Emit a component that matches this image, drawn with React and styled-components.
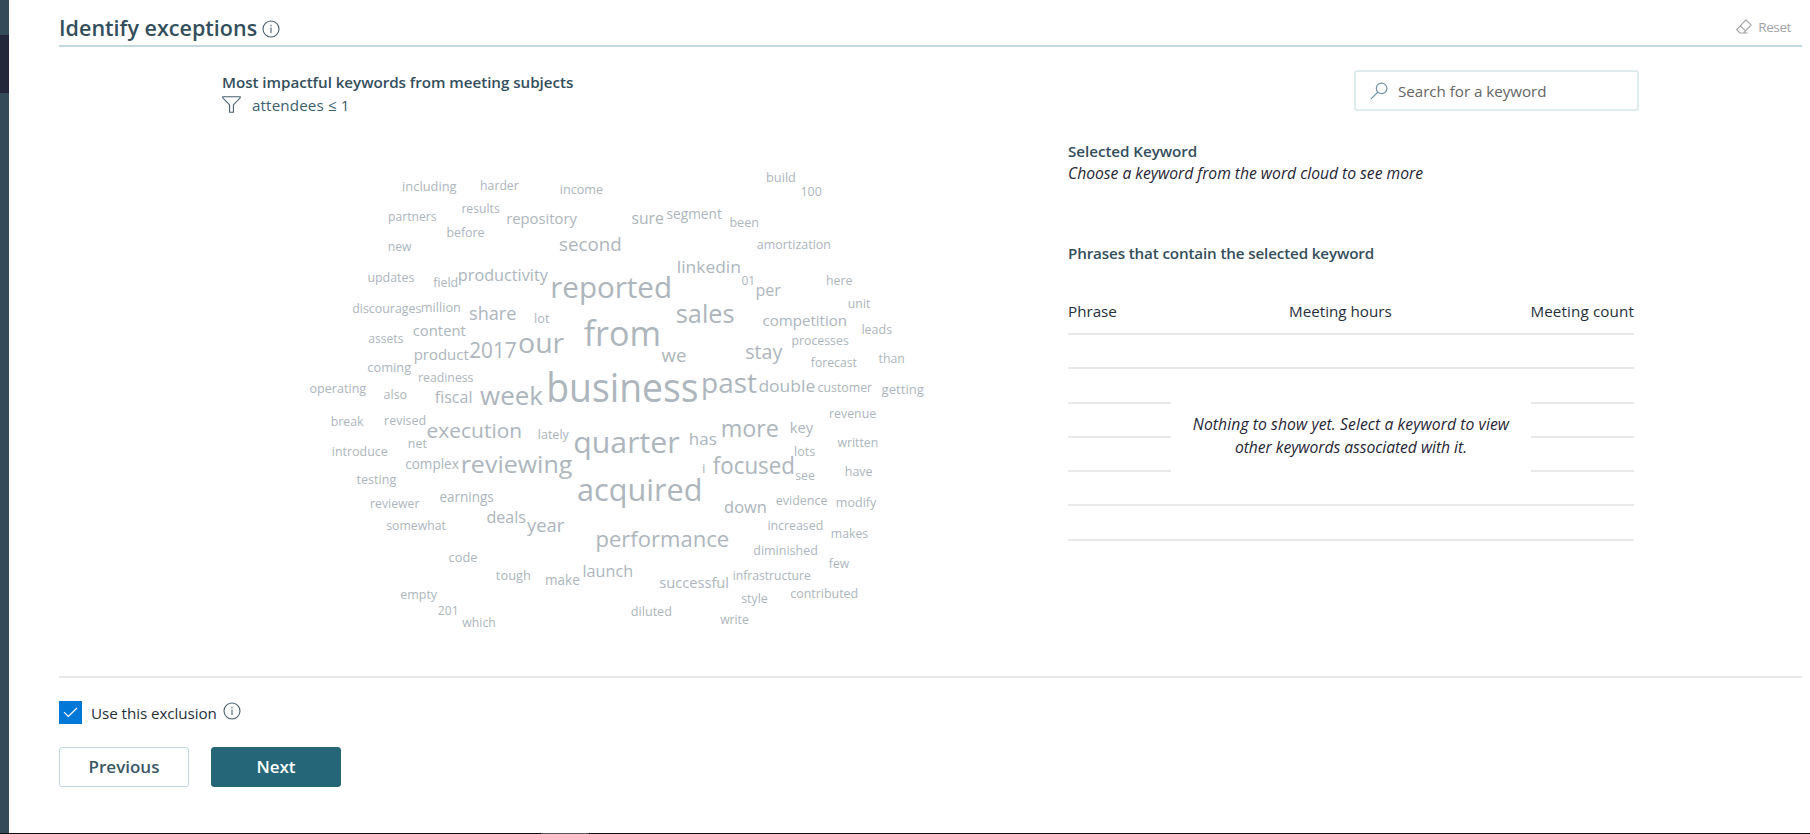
import React from "react";
import styled, { createGlobalStyle } from "styled-components";

const GlobalStyle = createGlobalStyle`
  * { box-sizing: border-box; }
  body { margin: 0; background: #fff; font-family: "Open Sans", "Noto Sans", sans-serif; }
`;

const Screen = styled.div`
  display: flex;
  flex-direction: column;
  height: 834px;
  width: 1810px;
  overflow: hidden;
`;
const Shell = styled.div`
  flex: 1;
  display: flex;
`;
const Rail = styled.div`
  width: 9px;
  padding-top: 35px;
  background: #344b59;
`;
const RailActive = styled.div`
  width: 9px;
  height: 58px;
  background: #23273a;
`;
const Main = styled.main`
  flex: 1;
  padding: 0 8px 0 50px;
  display: flex;
  flex-direction: column;
`;
const Header = styled.header`
  height: 47px;
  padding: 10px 11px 0 0;
  border-bottom: 2px solid #c3d9e1;
  display: flex;
  align-items: center;
  justify-content: space-between;
`;
const TitleGroup = styled.div`
  display: flex;
  align-items: center;
  gap: 5px;
  svg { margin-top: 2px; }
`;
const Title = styled.h1`
  margin: 0;
  font-size: 21.5px;
  font-weight: 600;
  line-height: 30px;
  letter-spacing: 0.02px;
  color: #334e5c;
`;
const ResetButton = styled.button`
  display: flex;
  align-items: center;
  gap: 6px;
  border: 0;
  padding: 0;
  margin-top: -2px;
  background: none;
  font: 400 13.5px/18px "Open Sans", sans-serif;
  letter-spacing: -0.4px;
  color: #a3a3a3;
`;
const Body = styled.section`
  height: 629px;
  padding: 23px 163px 0;
  display: flex;
  justify-content: space-between;
`;
const CloudPanel = styled.div`
  width: 740px;
`;
const Line = styled.div`
  height: ${(p) => p.$h || 24}px;
  line-height: ${(p) => p.$h || 24}px;
  font-size: 15.2px;
  white-space: nowrap;
  letter-spacing: ${(p) => p.$track || 0}px;
  color: #26303c;
`;
const Heading = styled(Line)`
  font-weight: 600;
  color: #334e5c;
`;
const Hint = styled(Line)`
  font-size: 15.7px;
  font-style: italic;
  color: #1f2536;
`;
const FilterRow = styled.div`
  display: flex;
  align-items: center;
  gap: 11px;
  height: 24px;
  margin-top: -1px;
  svg { margin-top: -2px; }
`;
const FilterText = styled(Line)`
  color: #3c6070;
`;
const Cloud = styled.svg`
  display: block;
  margin: 43px 0 0 78px;
  fill: #adb6bd;
  font-family: "Open Sans", "Noto Sans", sans-serif;
`;
const Details = styled.div`
  width: 571px;
  display: flex;
  flex-direction: column;
`;
const SearchBox = styled.div`
  align-self: flex-end;
  width: 285px;
  height: 41px;
  margin-bottom: 29px;
  padding-left: 14px;
  border: 2px solid #dfecee;
  border-radius: 3px;
  display: flex;
  align-items: center;
  gap: 10px;
`;
const Placeholder = styled(Line)`
  color: #666;
`;
const PhrasesHeading = styled(Heading)`
  margin-top: 57px;
`;
const Table = styled.div`
  position: relative;
  width: 566px;
  margin-top: 34px;
`;
const HeadRow = styled.div`
  display: grid;
  grid-template-columns: 221px 1fr auto;
  height: 36px;
  border-bottom: 2px solid #e9e9e9;
`;
const EmptyRow = styled.div`
  height: 34.25px;
  border-bottom: 2px solid #e9e9e9;
`;
const EmptyMessage = styled.div`
  position: absolute;
  top: 98px;
  left: 103px;
  width: 360px;
  height: 80px;
  padding-top: 16px;
  background: #fff;
  text-align: center;
`;
const Footer = styled.footer`
  border-top: 2px solid #e9e9e9;
  padding-top: 23px;
`;
const CheckRow = styled.div`
  display: flex;
  align-items: center;
  height: 23px;
  > svg { margin: -3px 0 0 6px; }
`;
const CheckBox = styled.span`
  width: 23px;
  height: 23px;
  margin-right: 9px;
  background: #0078d7;
  display: flex;
  align-items: center;
  justify-content: center;
`;
const Buttons = styled.div`
  display: flex;
  gap: 22px;
  margin-top: 23px;
`;
const Button = styled.button`
  width: 130px;
  height: 40px;
  padding: 0;
  border-radius: 3px;
  border: 1px solid ${(p) => (p.$primary ? "#256778" : "#c3d9e1")};
  background: ${(p) => (p.$primary ? "#256778" : "#fff")};
  color: ${(p) => (p.$primary ? "#fff" : "#3a5766")};
  font: 600 17px/24px "Open Sans", sans-serif;
`;
const Taskbar = styled.div`
  height: 1px;
  padding-left: 541px;
  background: #101014;
`;
const TaskbarItem = styled.div`
  width: 48px;
  height: 1px;
  background: #55555a;
`;

// word, ink left, ink right, baseline, size
const WORDS = [
  ["including", 403, 455.7, 191.7, 13.6], ["harder", 481, 518.3, 190.3, 13.6], ["income", 560.7, 602.7, 194, 13.6],
  ["results", 462.3, 499.3, 213, 13.6], ["partners", 389, 436, 221.3, 13.6], ["repository", 507.3, 576.7, 224.3, 16],
  ["before", 447.3, 484, 237, 13.6], ["new", 388.7, 411.3, 251, 13.6], ["second", 559.7, 620.3, 250.7, 19],
  ["updates", 368.3, 414, 282, 13.6], ["field", 433.3, 457.3, 287, 13.6], ["productivity", 459, 547.7, 280.7, 17.5],
  ["reported", 552.3, 670, 297.7, 31], ["discourages", 352.7, 421, 313, 13.6], ["million", 421.7, 460, 312.3, 13.6],
  ["share", 469.7, 515.7, 320, 19], ["lot", 535, 549.3, 323, 13.6], ["content", 413.3, 465.7, 336, 16],
  ["assets", 368.7, 403, 343, 13.6], ["product", 414.7, 468.7, 360, 16], ["2017", 470, 516, 358, 22.5],
  ["our", 519, 563.3, 352.7, 29], ["from", 584, 658.7, 345.7, 36], ["coming", 367.7, 410.3, 372, 13.6],
  ["readiness", 419, 473, 382.3, 13.6], ["operating", 310, 365.3, 393.3, 13.6], ["also", 384, 406.7, 399, 13.6],
  ["fiscal", 435, 471.3, 403, 17.5], ["week", 480.3, 542, 405, 27], ["business", 549, 697.3, 401.7, 41.5],
  ["build", 767, 795, 182.3, 13.6], ["100", 801.3, 821.3, 196, 13.6], ["sure", 632, 663.3, 224, 17],
  ["segment", 667, 721.7, 219.3, 14.3], ["been", 730.3, 758, 227.3, 13.6], ["amortization", 757.3, 830, 249.3, 13.6],
  ["linkedin", 678, 739.7, 273, 18], ["01", 742, 754.3, 285, 13.6], ["per", 756.7, 780.3, 295.7, 17.5],
  ["here", 827, 852, 285, 13.6], ["unit", 848.7, 870.3, 308, 13.6], ["sales", 676.7, 733.7, 322.7, 26.5],
  ["competition", 763, 846, 326, 16], ["leads", 862.3, 891.7, 334, 13.6], ["processes", 792.3, 848.3, 345.3, 13.6],
  ["we", 661.7, 685.7, 361.7, 18.5], ["stay", 746, 782, 359, 20.5], ["forecast", 811, 856.7, 367, 13.6],
  ["than", 878.7, 904, 363.3, 13.6], ["past", 703, 756.7, 392.7, 28], ["double", 759, 814.7, 392, 17.5],
  ["customer", 818, 871.7, 392.3, 13.6], ["getting", 882, 923, 394, 13.6], ["break", 331.7, 363, 426.3, 13.6],
  ["revised", 385, 425.3, 425.3, 13.6], ["execution", 427.3, 520.7, 438.3, 21.5], ["lately", 538.7, 568.7, 439.3, 13.6],
  ["net", 408.7, 426.7, 448.3, 13.6], ["quarter", 574.3, 678.7, 452.7, 31], ["introduce", 332.7, 387.3, 456.3, 13.6],
  ["complex", 405.7, 458.7, 469.3, 14.3], ["reviewing", 462.3, 570.7, 473, 24.5], ["testing", 356.7, 395.3, 484.3, 13.6],
  ["acquired", 578, 700.3, 501, 32], ["reviewer", 371, 419, 508.3, 13.6], ["earnings", 440, 493.3, 502.3, 14.3],
  ["deals", 487, 525.3, 523, 17], ["year", 527.3, 563.7, 532.3, 19], ["somewhat", 386.7, 445.7, 530.3, 13.6],
  ["performance", 597, 728.3, 546.7, 23.5], ["code", 449, 477, 562.3, 13.6], ["tough", 496, 530, 580.3, 13.6],
  ["make", 546, 579.3, 585.3, 14.3], ["launch", 583.7, 632, 577.3, 17.5], ["empty", 400.7, 437, 599.3, 13.6],
  ["201", 438.3, 457.7, 615.3, 13.6], ["which", 462.3, 495, 627.3, 13.6], ["revenue", 830, 875.7, 418.3, 13.6],
  ["more", 722.3, 778, 436.7, 24.5], ["key", 790.7, 813, 433, 15.5], ["has", 690, 716.3, 445, 17.5],
  ["written", 837.7, 877.3, 447.3, 13.6], ["lots", 795, 814.7, 456.3, 13.6], ["i", 703, 704.7, 473, 13.6],
  ["focused", 713, 793.3, 473.7, 24], ["see", 795.7, 814.3, 480.3, 13.6], ["have", 845.7, 872, 476.3, 13.6],
  ["down", 724.7, 765.7, 513.3, 17.5], ["evidence", 776.3, 827, 505.3, 13.6], ["modify", 836.7, 876.3, 507.3, 13.6],
  ["increased", 768.3, 822.3, 530.3, 13.6], ["makes", 831.7, 867.7, 538.3, 13.6], ["diminished", 753.7, 817, 555.3, 13.6],
  ["few", 829, 849, 568.3, 13.6], ["infrastructure", 733.7, 810.3, 580.3, 13.6], ["successful", 659.7, 728, 588, 16],
  ["style", 741.7, 767.3, 603.3, 13.6], ["contributed", 790.7, 857.3, 598.3, 13.6], ["diluted", 631.3, 671, 616.3, 13.6],
  ["write", 720.3, 748.3, 624.3, 13.6],
];

// side bearing of a glyph, in em, by the shape of its edge
const bearing = (ch, straight) => (straight.includes(ch) ? 0.07 : "vwyxft".includes(ch) ? 0.01 : 0.035);

function WordCloud() {
  return (
    <Cloud width="640" height="480" viewBox="300 160 640 480">
      {WORDS.map(([word, left, right, base, size]) => {
        const fs = size * 0.955;
        const lead = bearing(word[0], "bhiklmnpru1") * fs;
        const tail = bearing(word[word.length - 1], "dghimnlu1") * fs;
        return (
          <text
            key={word}
            x={left - lead}
            y={size < 17 ? base - 0.4 : base}
            fontSize={fs}
            textLength={right - left + lead + tail}
            lengthAdjust="spacingAndGlyphs"
          >
            {word}
          </text>
        );
      })}
    </Cloud>
  );
}

const InfoIcon = () => (
  <svg width="18" height="18" viewBox="0 0 18 18" fill="none" stroke="#48616f" strokeWidth="1.1">
    <circle cx="9" cy="9" r="8" />
    <path d="M9 7.5v5.5M9 4.8v1.4" />
  </svg>
);
const EraserIcon = () => (
  <svg width="16" height="15" viewBox="0 0 16 15" fill="none" stroke="#a3a3a3" strokeWidth="1.1">
    <path d="M10 .9 15.3 6 7.7 14H4L.7 10.6zM4.300 6.900 9.700 11.900M4 14H11.500" />
  </svg>
);
const FilterIcon = () => (
  <svg width="19" height="17" viewBox="0 0 19 17" fill="none" stroke="#48616f" strokeWidth="1.1">
    <path d="M.8.7h17.400v1.100L11.400 8.900v7.400H7.600V8.900L.8 1.800z" />
  </svg>
);
const SearchIcon = () => (
  <svg width="18" height="18" viewBox="0 0 18 18" fill="none" stroke="#6f94a5" strokeWidth="1.2">
    <circle cx="11.6" cy="6.4" r="5.3" />
    <path d="M7.8 10.2.8 17.2" />
  </svg>
);
const CheckIcon = () => (
  <svg width="15" height="11" viewBox="0 0 15 11" fill="none" stroke="#fff" strokeWidth="1.2">
    <path d="M1 5.2 5.3 9.5 14 1" />
  </svg>
);

export default function App() {
  return (
    <Screen>
      <GlobalStyle />
      <Shell>
        <Rail>
          <RailActive />
        </Rail>
        <Main>
          <Header>
            <TitleGroup>
              <Title>Identify exceptions</Title>
              <InfoIcon />
            </TitleGroup>
            <ResetButton>
              <EraserIcon />
              Reset
            </ResetButton>
          </Header>
          <Body>
            <CloudPanel>
              <Heading $track={-0.05}>Most impactful keywords from meeting subjects</Heading>
              <FilterRow>
                <FilterIcon />
                <FilterText $track={0.13}>attendees ≤ 1</FilterText>
              </FilterRow>
              <WordCloud />
            </CloudPanel>
            <Details>
              <SearchBox>
                <SearchIcon />
                <Placeholder $track={-0.04}>Search for a keyword</Placeholder>
              </SearchBox>
              <Heading $h={22} $track={-0.05}>Selected Keyword</Heading>
              <Hint $h={22} $track={-0.02}>Choose a keyword from the word cloud to see more</Hint>
              <PhrasesHeading $track={-0.14}>Phrases that contain the selected keyword</PhrasesHeading>
              <Table>
                <HeadRow>
                  <Line>Phrase</Line>
                  <Line>Meeting hours</Line>
                  <Line $track={0.13}>Meeting count</Line>
                </HeadRow>
                {[0, 1, 2, 3, 4, 5].map((n) => (
                  <EmptyRow key={n} />
                ))}
                <EmptyMessage>
                  <Hint $h={23} $track={0.08}>Nothing to show yet. Select a keyword to view</Hint>
                  <Hint $h={23} $track={-0.05}>other keywords associated with it.</Hint>
                </EmptyMessage>
              </Table>
            </Details>
          </Body>
          <Footer>
            <CheckRow>
              <CheckBox>
                <CheckIcon />
              </CheckBox>
              <Line $track={-0.06}>Use this exclusion</Line>
              <InfoIcon />
            </CheckRow>
            <Buttons>
              <Button>Previous</Button>
              <Button $primary>Next</Button>
            </Buttons>
          </Footer>
        </Main>
      </Shell>
      <Taskbar>
        <TaskbarItem />
      </Taskbar>
    </Screen>
  );
}
